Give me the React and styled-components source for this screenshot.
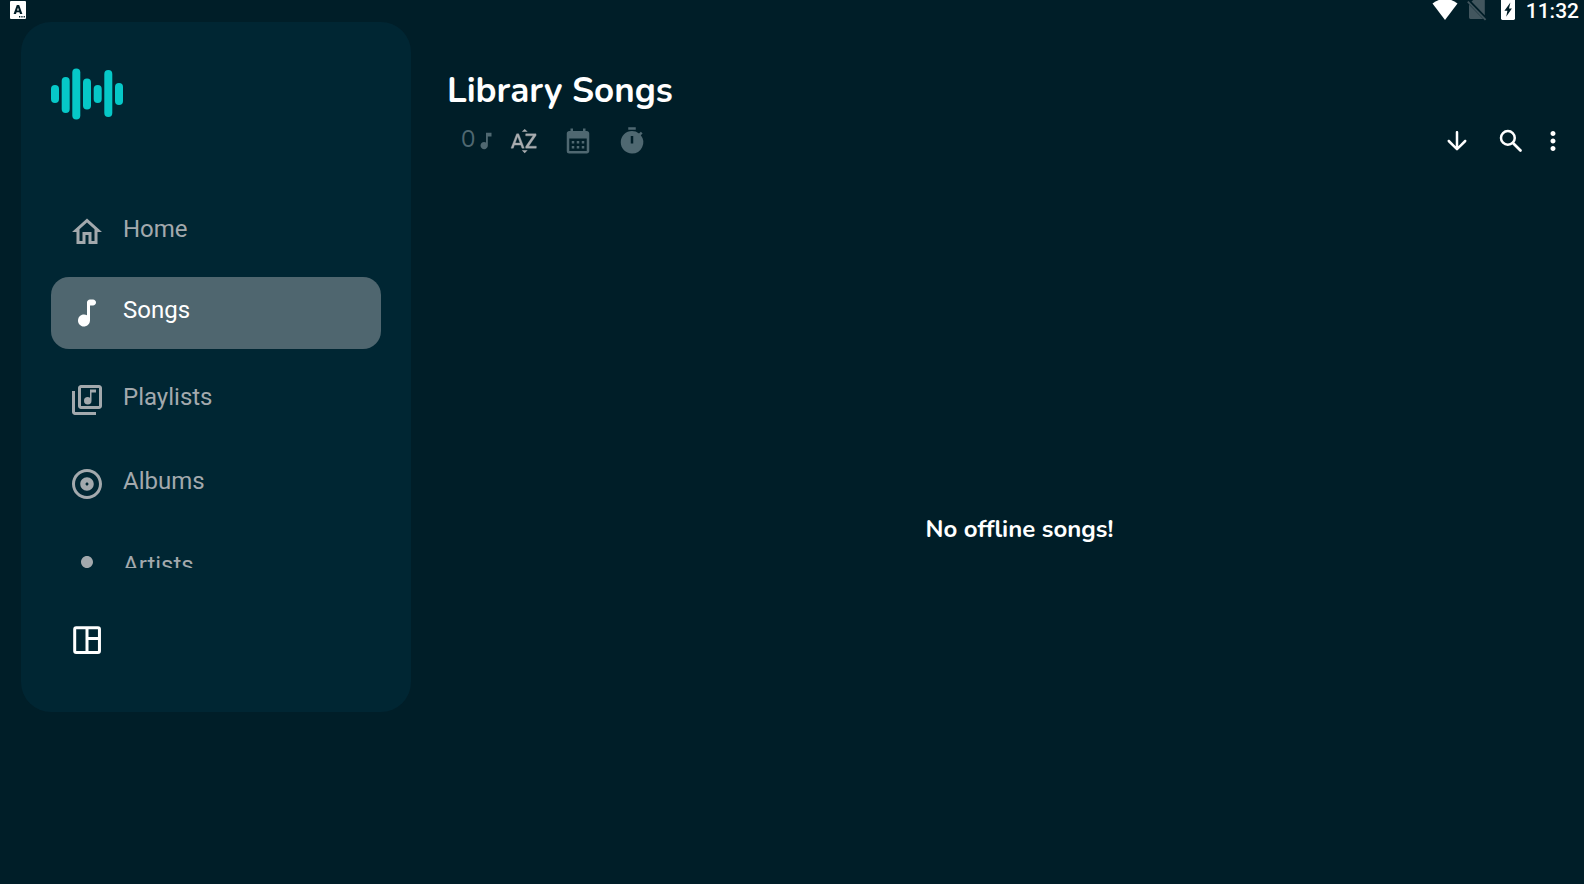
import React from 'react'
import styled, { createGlobalStyle } from 'styled-components'
import {
    MdOutlineHome,
    MdOutlineLibraryMusic,
    MdOutlineAlbum,
    MdPerson,
    MdMusicNote,
    MdCalendarMonth,
    MdTimer,
    MdMoreVert,
} from 'react-icons/md'

const NoteIcon = () => (
    <svg viewBox="0 0 24 24" fill="currentColor" aria-hidden="true">
        <path d="M12 5v8.55c-.94-.54-2.1-.75-3.33-.32-1.34.48-2.37 1.67-2.61 3.07-.46 2.74 1.86 5.08 4.59 4.65 1.96-.31 3.35-2.11 3.35-4.1V7h2c1.1 0 2-.9 2-2s-.9-2-2-2h-2c-1.1 0-2 .9-2 2z" />
    </svg>
)

const SortIcon = () => (
    <svg viewBox="0 0 24 24" fill="currentColor" aria-hidden="true">
        <path d="M14.94 4.66h-4.72l2.36-2.36zM10.25 19.37h4.66l-2.33 2.33z" />
        <path
            d="M6.1 6.27L1.6 17.73h1.84l.92-2.45h5.11l.92 2.45h1.84L7.74 6.27H6.1zm-1.13 7.37l1.94-5.18 1.94 5.18H4.97zm10.76 2.5h6.12v1.59h-8.53v-1.29l5.92-8.56h-5.88v-1.6h8.3v1.26l-5.93 8.6z"
            stroke="currentColor"
            strokeWidth=".3"
            strokeLinejoin="round"
        />
    </svg>
)

const ArrowDownIcon = () => (
    <svg viewBox="0 0 24 24" fill="currentColor" aria-hidden="true">
        <path d="M11 5v11.17l-4.88-4.88c-.39-.39-1.03-.39-1.42 0-.39.39-.39 1.02 0 1.41l6.59 6.59c.39.39 1.02.39 1.41 0l6.59-6.59c.39-.39.39-1.02 0-1.41-.39-.39-1.02-.39-1.41 0L13 16.17V5c0-.55-.45-1-1-1s-1 .45-1 1z" />
    </svg>
)

const SearchIcon = () => (
    <svg viewBox="0 0 24 24" fill="none" stroke="currentColor" strokeWidth="2" aria-hidden="true">
        <circle cx="9.5" cy="9.5" r="5.5" />
        <path d="M14 14l5.6 5.6" strokeWidth="2.2" strokeLinecap="round" />
    </svg>
)

const LayoutIcon = () => (
    <svg viewBox="0 0 24 24" fill="none" stroke="currentColor" strokeWidth="2" aria-hidden="true">
        <rect x="3.8" y="3.8" width="16.5" height="16.5" rx="1" />
        <path d="M12 4v16M12 11h8" />
    </svg>
)

// x, top and height of every bar of the wave
const bars = [
    [0, 27, 18],
    [10.7, 19, 36],
    [21.3, 10.5, 51],
    [32, 20.5, 31],
    [42.7, 27, 18],
    [53.3, 12, 47],
    [64, 25, 22],
]

const Logo = () => (
    <LogoSvg viewBox="0 0 72 72" role="img" aria-label="Logo">
        {bars.map(([x, y, height]) => (
            <rect key={x} x={x} y={y} width="8" height={height} rx="4" />
        ))}
    </LogoSvg>
)

const navItems = [
    { label: 'Home', icon: <MdOutlineHome /> },
    { label: 'Songs', icon: <NoteIcon />, active: true },
    { label: 'Playlists', icon: <MdOutlineLibraryMusic /> },
    { label: 'Albums', icon: <MdOutlineAlbum /> },
    { label: 'Artists', icon: <MdPerson /> },
]

const StatusBar = () => (
    <StatusWrapper>
        <svg width="16" height="20" viewBox="0 0 16 20" aria-hidden="true">
            <rect y="1" width="16" height="18" rx="1" fill="#fff" />
            <path d="M3.6 14L6.8 5h2.4l3.2 9H10l-.6-1.8H6.6L6 14zM7.1 10.4h1.8L8 7.4z" fill="#001e28" fillRule="evenodd" />
            <path d="M9 16h1.3v1.4H9zM11.3 16h1.3v1.4h-1.3zM13.6 16h1.3v1.4h-1.3z" fill="#001e28" />
        </svg>
        <StatusGroup>
            <svg width="26" height="22" viewBox="0 0 26 22" fill="#fff" aria-hidden="true">
                <path d="M0.5 3.6Q6 -1 13 -1T25.5 3.6L13 20z" />
            </svg>
            <svg width="20" height="22" viewBox="0 0 20 22" aria-hidden="true">
                <path d="M6.2 0H17.8V15.2L4.5 1.6zM2 4.6V17.6Q2 19 3.4 19H16.2z" fill="#42565e" />
                <path d="M0.8 1.6L18.6 19.8" stroke="#42565e" strokeWidth="1.8" />
            </svg>
            <svg width="14" height="22" viewBox="0 0 14 22" aria-hidden="true">
                <path d="M0 0h14v18.6q0 1.4-1.4 1.4H1.4Q0 20 0 18.6z" fill="#fff" />
                <path d="M9.4 2.4L3.4 10.8h3l-1.2 6L10.9 8.4H8z" fill="#001e28" />
            </svg>
            <Clock>11:32</Clock>
        </StatusGroup>
    </StatusWrapper>
)

const Sidebar = () => (
    <SidebarWrapper>
        <Logo />
        <NavList>
            {navItems.map(item => (
                <NavButton key={item.label} $active={item.active} aria-current={item.active ? 'page' : undefined}>
                    {item.icon}
                    <span>{item.label}</span>
                </NavButton>
            ))}
        </NavList>
        <LayoutButton aria-label="Change layout">
            <LayoutIcon />
        </LayoutButton>
    </SidebarWrapper>
)

const Library = () => (
    <LibraryWrapper>
        <Title>Library Songs</Title>
        <Toolbar>
            <SongCount>
                0<MdMusicNote />
            </SongCount>
            <SortGroup>
                <IconButton $color="#a9adb0" aria-label="Sort by name"><SortIcon /></IconButton>
                <IconButton $color="#4f6871" aria-label="Sort by date"><MdCalendarMonth /></IconButton>
                <IconButton $color="#4f6871" aria-label="Sort by duration"><MdTimer /></IconButton>
            </SortGroup>
            <ActionGroup>
                <IconButton aria-label="Sort direction"><ArrowDownIcon /></IconButton>
                <IconButton aria-label="Search"><SearchIcon /></IconButton>
            </ActionGroup>
            <IconButton aria-label="More"><MdMoreVert /></IconButton>
        </Toolbar>
        <Empty>
            <p>No offline songs!</p>
        </Empty>
    </LibraryWrapper>
)

export default function App() {
    return (
        <Page>
            <GlobalStyle />
            <StatusBar />
            <Content>
                <Sidebar />
                <Library />
            </Content>
        </Page>
    )
}

const GlobalStyle = createGlobalStyle`
* {
    box-sizing: border-box;
}
body {
    margin: 0;
    background: #001e28;
    color: #fff;
    font-family: Roboto, sans-serif;
}
button {
    padding: 0;
    border: none;
    background: none;
    color: inherit;
    font: inherit;
    cursor: pointer;
}
svg {
    display: block;
    flex-shrink: 0;
}
`

const Page = styled.div`
    display: flex;
    flex-direction: column;
    height: 100vh;
`

const StatusWrapper = styled.header`
    display: flex;
    justify-content: space-between;
    height: 22px;
    padding: 0 5px 0 10px;
`

const StatusGroup = styled.div`
    display: flex;
    gap: 9px;
    svg + svg + svg {
        margin: 0 2px 0 5px;
    }
`

const Clock = styled.time`
    font-size: 21px;
    font-weight: 500;
    line-height: 22px;
`

const Content = styled.div`
    display: flex;
    flex: 1;
    min-height: 0;
`

const SidebarWrapper = styled.aside`
    display: flex;
    flex-direction: column;
    align-items: flex-start;
    flex: 0 0 390px;
    margin: 0 36px 172px 21px;
    padding: 36px 30px 54px;
    border-radius: 30px;
    background: #002633;
`

const LogoSvg = styled.svg`
    width: 72px;
    height: 72px;
    margin-bottom: 66px;
    fill: #06c8c8;
`

const NavList = styled.nav`
    display: flex;
    flex-direction: column;
    align-self: stretch;
    flex: 1;
    min-height: 0;
    margin-bottom: 54px;
    overflow: hidden;
`

const NavButton = styled.button`
    display: flex;
    align-items: flex-start;
    flex-shrink: 0;
    gap: 18px;
    height: 72px;
    margin: ${props => (props.$active ? "-3px 0 15px" : "0 0 12px")};
    padding: 18px;
    border-radius: 18px;
    background: ${props => (props.$active ? "#4f666f" : "transparent")};
    color: ${props => (props.$active ? "#fff" : "#a3a9ad")};
    font-size: 24px;
    line-height: 30px;
    svg {
        width: 36px;
        height: 36px;
    }
`

const LayoutButton = styled.button`
    margin-left: 18px;
    svg {
        width: 36px;
        height: 36px;
    }
`

const LibraryWrapper = styled.main`
    display: flex;
    flex-direction: column;
    flex: 1;
    padding-top: 42px;
`

const Title = styled.h1`
    margin: 0;
    font-family: Nunito, Lato, sans-serif;
    font-size: 35px;
    font-weight: 700;
    line-height: 54px;
`

const Toolbar = styled.div`
    display: flex;
    align-items: center;
    height: 46px;
    padding: 0 16px 0 14px;
`

const SongCount = styled.div`
    display: flex;
    align-items: flex-end;
    padding-bottom: 4px;
    color: #4f6871;
    font-family: Nunito, Lato, sans-serif;
    font-size: 24px;
    line-height: 26px;
    svg {
        width: 22px;
        height: 22px;
    }
`

const SortGroup = styled.div`
    display: flex;
    gap: 24px;
    margin-left: 12px;
`

const ActionGroup = styled.div`
    display: flex;
    gap: 24px;
    margin: 0 12px 0 auto;
`

const IconButton = styled.button`
    color: ${props => props.$color || "#fff"};
    svg {
        width: 30px;
        height: 30px;
    }
`

const Empty = styled.section`
    display: flex;
    align-items: center;
    justify-content: center;
    flex: 1;
    padding: 10px 0 0 8px;
    p {
        margin: 0;
        font-family: Nunito, Lato, sans-serif;
        font-size: 24px;
        font-weight: 700;
    }
`
